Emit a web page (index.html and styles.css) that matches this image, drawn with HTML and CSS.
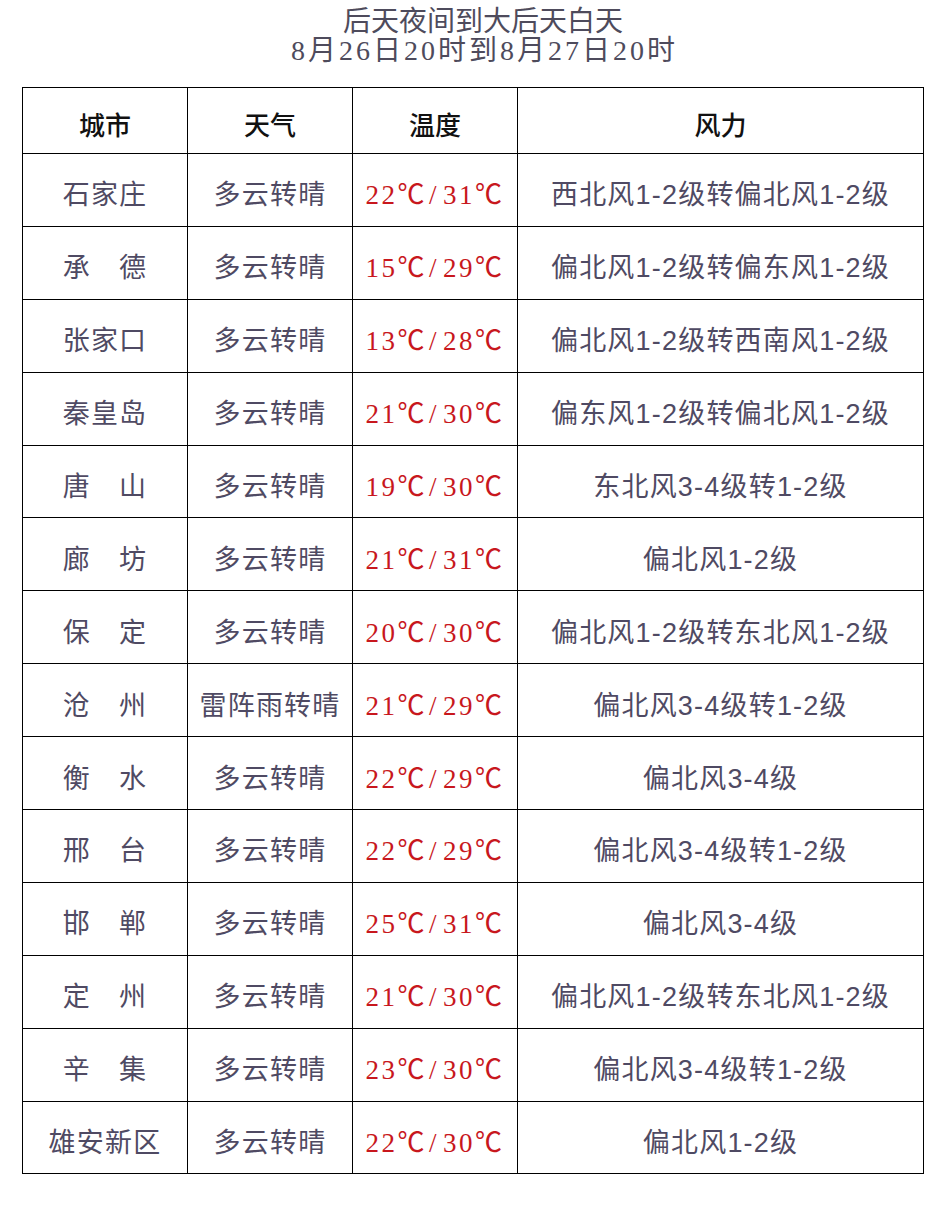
FILE: index.html
```html
<!DOCTYPE html>
<html lang="zh-CN">
<head>
<meta charset="utf-8">
<title>后天夜间到大后天白天</title>
<link rel="stylesheet" href="styles.css">
</head>
<body>
<div class="page">
  <header class="title">
    <div class="title-line">后天夜间到大后天白天</div>
    <div class="title-line date">8月26日20时到8月27日20时</div>
  </header>
  <table class="forecast">
    <colgroup>
      <col class="c-city"><col class="c-weather"><col class="c-temp"><col class="c-wind">
    </colgroup>
    <thead>
      <tr><th>城市</th><th>天气</th><th>温度</th><th>风力</th></tr>
    </thead>
    <tbody>
      <tr><td class="city">石家庄</td><td class="wx">多云转晴</td><td class="temp">22℃<span class="sl">/</span>31℃</td><td class="wind">西北风1-2级转偏北风1-2级</td></tr>
      <tr><td class="city">承　德</td><td class="wx">多云转晴</td><td class="temp">15℃<span class="sl">/</span>29℃</td><td class="wind">偏北风1-2级转偏东风1-2级</td></tr>
      <tr><td class="city">张家口</td><td class="wx">多云转晴</td><td class="temp">13℃<span class="sl">/</span>28℃</td><td class="wind">偏北风1-2级转西南风1-2级</td></tr>
      <tr><td class="city">秦皇岛</td><td class="wx">多云转晴</td><td class="temp">21℃<span class="sl">/</span>30℃</td><td class="wind">偏东风1-2级转偏北风1-2级</td></tr>
      <tr><td class="city">唐　山</td><td class="wx">多云转晴</td><td class="temp">19℃<span class="sl">/</span>30℃</td><td class="wind">东北风3-4级转1-2级</td></tr>
      <tr><td class="city">廊　坊</td><td class="wx">多云转晴</td><td class="temp">21℃<span class="sl">/</span>31℃</td><td class="wind">偏北风1-2级</td></tr>
      <tr><td class="city">保　定</td><td class="wx">多云转晴</td><td class="temp">20℃<span class="sl">/</span>30℃</td><td class="wind">偏北风1-2级转东北风1-2级</td></tr>
      <tr><td class="city">沧　州</td><td class="wx">雷阵雨转晴</td><td class="temp">21℃<span class="sl">/</span>29℃</td><td class="wind">偏北风3-4级转1-2级</td></tr>
      <tr><td class="city">衡　水</td><td class="wx">多云转晴</td><td class="temp">22℃<span class="sl">/</span>29℃</td><td class="wind">偏北风3-4级</td></tr>
      <tr><td class="city">邢　台</td><td class="wx">多云转晴</td><td class="temp">22℃<span class="sl">/</span>29℃</td><td class="wind">偏北风3-4级转1-2级</td></tr>
      <tr><td class="city">邯　郸</td><td class="wx">多云转晴</td><td class="temp">25℃<span class="sl">/</span>31℃</td><td class="wind">偏北风3-4级</td></tr>
      <tr><td class="city">定　州</td><td class="wx">多云转晴</td><td class="temp">21℃<span class="sl">/</span>30℃</td><td class="wind">偏北风1-2级转东北风1-2级</td></tr>
      <tr><td class="city">辛　集</td><td class="wx">多云转晴</td><td class="temp">23℃<span class="sl">/</span>30℃</td><td class="wind">偏北风3-4级转1-2级</td></tr>
      <tr><td class="city">雄安新区</td><td class="wx">多云转晴</td><td class="temp">22℃<span class="sl">/</span>30℃</td><td class="wind">偏北风1-2级</td></tr>
    </tbody>
  </table>
</div>
</body>
</html>
```

FILE: styles.css
```css
html, body {
  margin: 0;
  padding: 0;
  background: #ffffff;
}

body {
  font-family: "Liberation Serif", "Noto Sans CJK SC", serif;
  color: #4f4a63;
}

.page {
  width: 942px;
  height: 1218px;
  overflow: hidden;
}

.title {
  padding-top: 7px;
  padding-left: 24px;
  height: 82px;
  box-sizing: border-box;
  text-align: center;
  color: #4e4b5c;
}

.title-line {
  font-size: 28px;
  line-height: 29px;
  letter-spacing: 0;
}

.title-line.date {
  letter-spacing: 3px;
  padding-left: 3px;
}

.forecast {
  margin-left: 22px;
  margin-top: 5px;
  border-collapse: collapse;
  table-layout: fixed;
  width: 901px;
}

.c-city, .c-weather, .c-temp { width: 165px; }
.c-wind { width: 406px; }

.forecast th,
.forecast td {
  border: 1px solid #000;
  padding: 0;
  text-align: center;
  vertical-align: middle;
}

.forecast th {
  height: 66px;
  font-size: 26px;
  font-weight: 500;
  color: #111;
  padding-top: 5px;
  box-sizing: border-box;
}

.forecast td {
  height: 72.9px;
  font-size: 27px;
  letter-spacing: 1.2px;
  padding-top: 6px;
  box-sizing: border-box;
}

.forecast td.temp {
  color: #c8171d;
  font-size: 27px;
  letter-spacing: 2.5px;
}

.forecast td.temp .sl {
  padding: 0 4px 0 2px;
}

.forecast td.wind {
  font-family: "Liberation Sans", "Noto Sans CJK SC", sans-serif;
}
```
